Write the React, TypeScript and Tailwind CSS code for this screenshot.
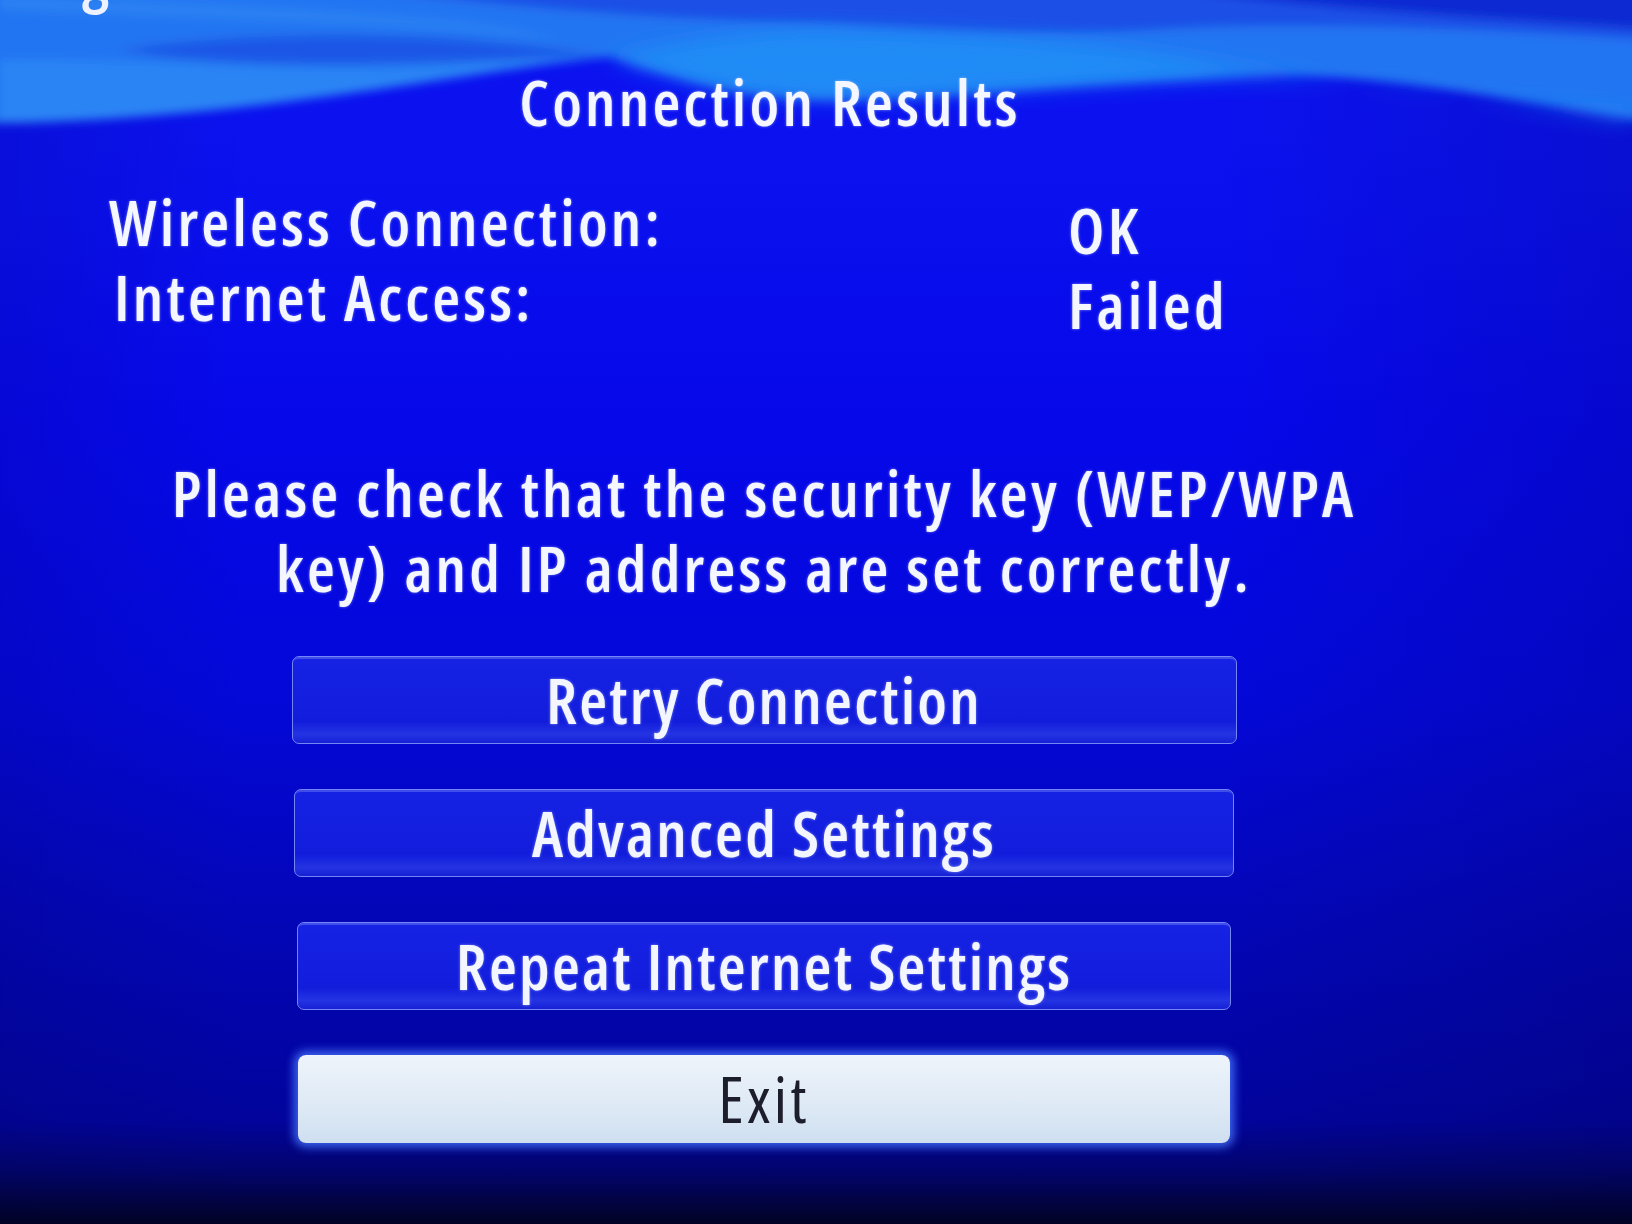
import React from "react";

const buttons = [
  { label: "Retry Connection", w: "w-[945px]" },
  { label: "Advanced Settings", w: "w-[940px]" },
  { label: "Repeat Internet Settings", w: "w-[934px]" },
];

const MenuButton = ({ label, w }: { label: string; w: string }) => {
  return (
    <div
      className={`flex items-center justify-center ${w} h-[88px] rounded-[7px] border-[1.5px] border-[#7585f4] bg-[linear-gradient(180deg,#1622e4_0%,#121ddc_75%,#2434e2_90%,#1620d6_100%)] shadow-[inset_0_5px_0_-3px_rgba(140,160,255,0.35)]`}
    >
      <span className="text-[64px] leading-none font-semibold tracking-[0.035em] text-[#f4f6ff] [text-shadow:0_0_3px_rgba(200,210,255,0.6)]">
        {label}
      </span>
    </div>
  );
};

const Waves = () => {
  return (
    <svg
      className="absolute left-0 top-0 pointer-events-none"
      width="1632"
      height="260"
      viewBox="0 0 1632 260"
    >
      <defs>
        <filter id="soft" x="-5%" y="-30%" width="110%" height="160%">
          <feGaussianBlur stdDeviation="5" />
        </filter>
        <filter id="softer" x="-5%" y="-30%" width="110%" height="160%">
          <feGaussianBlur stdDeviation="10" />
        </filter>
      </defs>
      <g filter="url(#soft)">
        <path
          d="M-20 -20 H1652 V122 C1500 100 1380 70 1233 76 C1050 84 900 100 816 98 C720 95 660 70 609 57 C470 70 250 120 0 123 L-20 125 Z"
          fill="#2274f2"
        />
        <path
          d="M120 50 C260 30 430 30 600 55 C430 62 260 72 120 50 Z"
          fill="#1a56e6"
        />
        <path
          d="M300 -20 H1652 V40 C1500 30 1300 20 1150 30 C1000 38 900 28 816 24 C650 18 500 8 300 -20 Z"
          fill="#1a4fe6"
        />
        <path
          d="M1100 -20 H1652 V30 C1500 18 1300 10 1100 -20 Z"
          fill="#0c2ad2"
        />
        <path
          d="M0 60 C150 58 300 75 450 66 C520 62 570 60 609 57 C470 70 250 120 0 123 Z"
          fill="#2a84f4"
        />
        <path
          d="M0 10 C200 20 400 22 560 40 C500 20 350 8 0 -5 Z"
          fill="#2a80f2"
        />
      </g>
      <g filter="url(#softer)">
        <path
          d="M609 57 C680 40 760 28 830 30 C950 34 1080 40 1180 56 C1300 76 1460 98 1632 112 L1632 120 C1500 104 1380 76 1233 76 C1050 84 900 100 816 98 C720 95 660 70 609 57 Z"
          fill="#1e8ef6"
          opacity="0.9"
        />
      </g>
    </svg>
  );
};

export default function App() {
  return (
    <div className="relative w-[1632px] h-[1224px] overflow-hidden bg-[linear-gradient(180deg,#0c14f0_0px,#0a10ee_200px,#0608ea_420px,#0408d8_700px,#0306b6_920px,#02049c_1120px,#020470_1168px,#010224_1224px)] font-['Open_Sans','Roboto',sans-serif] [font-stretch:75%]">
      <div className="absolute inset-0 bg-[linear-gradient(90deg,rgba(0,0,40,0.1)_0%,rgba(0,0,0,0)_15%,rgba(0,0,0,0)_75%,rgba(0,0,40,0.14)_100%)]" />
      <Waves />
      <span className="absolute left-[82px] top-[-56px] text-[64px] leading-none font-semibold text-[#eef2ff]">
        g
      </span>

      <div className="relative flex flex-col w-[1528px] text-[#f4f7ff] [text-shadow:0_0_3px_rgba(200,210,255,0.6)]">
        <h1 className="pt-[70px] pl-[12px] text-center text-[64px] leading-none font-semibold tracking-[0.05em]">
          Connection Results
        </h1>

        <div className="mt-[56px] flex flex-col pl-[109px] text-[64px] leading-none font-semibold tracking-[0.05em]">
          <div className="flex h-[75px]">
            <span className="w-[959px]">Wireless Connection:</span>
            <span className="pt-[8px]">OK</span>
          </div>
          <div className="flex h-[75px]">
            <span className="w-[959px] pl-[5px]">Internet Access:</span>
            <span className="pt-[8px]">Failed</span>
          </div>
        </div>

        <p className="mt-[115px] text-center text-[64px] leading-[75px] font-semibold tracking-[0.05em]">
          Please check that the security key (WEP/WPA
          <br />
          key) and IP address are set correctly.
        </p>

        <div className="mt-[51px] flex flex-col items-center gap-[45px]">
          {buttons.map((b) => (
            <MenuButton key={b.label} label={b.label} w={b.w} />
          ))}
          <div className="flex items-center justify-center w-[932px] h-[88px] rounded-[8px] bg-[linear-gradient(180deg,#eef4fb_0%,#dde9f5_60%,#cfdff0_100%)] shadow-[0_0_10px_4px_rgba(70,120,255,0.85)] [text-shadow:none]">
            <span className="text-[64px] leading-none font-medium tracking-[0.05em] text-[#1c1e2c]">Exit</span>
          </div>
        </div>
      </div>
    </div>
  );
}
